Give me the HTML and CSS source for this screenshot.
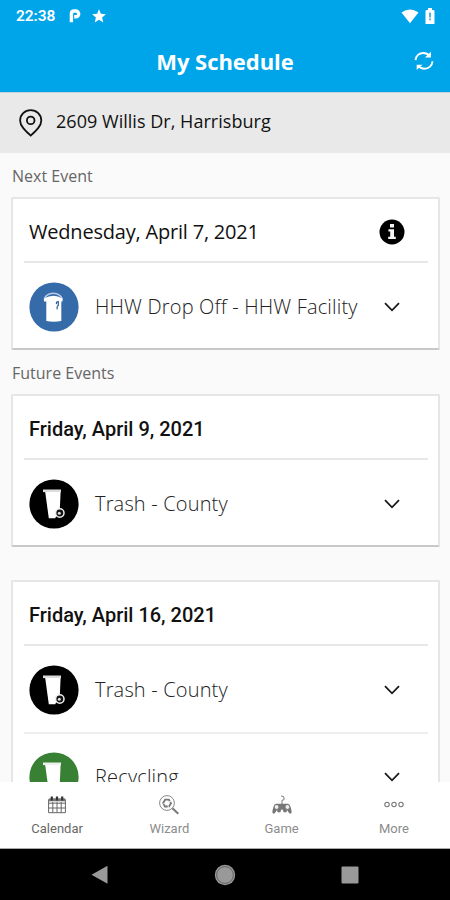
FILE: index.html
```html
<!DOCTYPE html>
<html lang="en">
<head>
<meta charset="utf-8">
<title>My Schedule</title>
<link rel="stylesheet" href="styles.css">
</head>
<body>
<svg class="defs" width="0" height="0" aria-hidden="true">
  <symbol id="chevron" viewBox="0 0 16 10"><path d="M1 1.2 8 8.4l7-7.2" fill="none" stroke="#161616" stroke-width="1.7"/></symbol>
  <symbol id="bin" viewBox="0 0 50 50">
    <path d="M14 10.5h18v2.6H14z" fill="#ddd"/>
    <path d="M16.2 13h15.4l-.8 18-4.6 8.2h-6.4z" fill="#fff"/>
    <circle cx="30.8" cy="34" r="4.2" fill="#111" stroke="#eee" stroke-width="1.5"/>
    <circle cx="30.3" cy="34.2" r="1.5" fill="#ddd"/>
  </symbol>
  <symbol id="recycle-bin" viewBox="0 0 50 50">
    <path d="M14 10.5h18v2.6H14z" fill="#eee"/>
    <path d="M16.2 13h15.4l-.8 18-4.6 8.2h-6.4z" fill="#fff"/>
  </symbol>
</svg>
<div class="screen">
  <header class="top">
    <div class="status">
      <span class="clock">22:38</span>
      <svg class="parking" width="12" height="14" viewBox="0 0 12 14"><path d="M2.4 13.2V4.4Q2.4 2 5 2H6.8a2.9 2.9 0 0 1 0 5.8H5.2" fill="none" stroke="#fff" stroke-width="3.4"/></svg>
      <svg class="star" width="14" height="14" viewBox="0 0 14 14"><path d="m7 .2 1.9 4.6 5 .4-3.8 3.2 1.2 5L7 10.8l-4.3 2.6 1.2-5L.1 5.2l5-.4z" fill="#fff"/></svg>
      <svg class="wifi" width="18" height="15" viewBox="0 0 18 15"><path d="M.5 3.6Q9-2.8 17.5 3.6L9 14.2z" fill="#fff"/></svg>
      <svg class="battery" width="10" height="16" viewBox="0 0 10 16"><path d="M3 0h4v2h1.2q1.3 0 1.3 1.3V16h-9V3.3Q.5 2 1.8 2H3z" fill="#fff"/><path d="M5 4.5v5M5 10.6v1.6" stroke="#0695d2" stroke-width="1.4"/></svg>
    </div>
    <div class="titlebar">
      <h1>My Schedule</h1>
      <svg class="refresh" width="20" height="20" viewBox="0 0 20 20"><path d="M1.5 9.2C2 5 5 2 9.5 2c2.6 0 4.6 1 6.3 3M18.5 10.2c-.3 4.4-3.7 7.5-8 7.5-2.8 0-5-1.1-6.6-3" fill="none" stroke="#fff" stroke-width="1.9"/><path d="M16.9.8v5.7h-6M2.7 19v-5.3h5.8z" fill="#fff"/></svg>
    </div>
  </header>
  <section class="address">
    <svg width="24" height="28" viewBox="0 0 24 28"><path d="M11.7 26.5C6.5 21.8 1.1 17.1 1.1 11.4a10.6 10.3 0 0 1 21.2 0c0 5.7-5.4 10.4-10.6 15.1z" fill="none" stroke="#111" stroke-width="1.8"/><circle cx="11.7" cy="11.4" r="3.8" fill="none" stroke="#111" stroke-width="1.8"/></svg>
    <span class="street">2609 Willis Dr, Harrisburg</span>
  </section>
  <main>
    <h2 class="next">Next Event</h2>
    <article class="card">
      <div class="date regular"><span>Wednesday, April 7, 2021</span>
        <svg class="info" width="26" height="26" viewBox="0 0 26 26"><circle cx="13" cy="13" r="12.5"/><path d="M11 5h4v3.4h-4zM9.4 10.3H15v7.4h1.8v2.2H9.2v-2.2h2v-5.2H9.4z" fill="#f4f4f4"/></svg>
      </div>
      <div class="event">
        <svg class="badge" width="50" height="50" viewBox="0 0 50 50"><circle cx="25" cy="25" r="24.6" fill="#356ba8"/><path d="M15.5 18.2C15 9 33.5 9 33 18.2" fill="none" stroke="#b9cbea" stroke-width="1.5"/><path d="M15 16.5q9.5-5.5 18.5 0v3h-1.2V39q-7.5 1.4-15 0V19.5H15z" fill="#fff"/><path d="M27.5 22.2q-.5-2.7 1.8-2.7v4q-1.7.3-1 3.8" fill="none" stroke="#315f9d" stroke-width="1.2"/></svg>
        <span class="name">HHW Drop Off - HHW Facility</span>
        <svg class="chev" width="16" height="10"><use href="#chevron"/></svg>
      </div>
    </article>
    <h2 class="future">Future Events</h2>
    <article class="card">
      <div class="date"><span>Friday, April 9, 2021</span></div>
      <div class="event">
        <svg class="badge" width="50" height="50" viewBox="0 0 50 50"><circle cx="25" cy="25" r="24.6"/><use href="#bin"/></svg>
        <span class="name">Trash - County</span>
        <svg class="chev" width="16" height="10"><use href="#chevron"/></svg>
      </div>
    </article>
    <article class="card later">
      <div class="date"><span>Friday, April 16, 2021</span></div>
      <div class="event">
        <svg class="badge" width="50" height="50" viewBox="0 0 50 50"><circle cx="25" cy="25" r="24.6"/><use href="#bin"/></svg>
        <span class="name">Trash - County</span>
        <svg class="chev" width="16" height="10"><use href="#chevron"/></svg>
      </div>
      <div class="event second">
        <svg class="badge" width="50" height="50" viewBox="0 0 50 50"><circle cx="25" cy="25" r="24.6" fill="#388033"/><use href="#recycle-bin"/></svg>
        <span class="name">Recycling</span>
        <svg class="chev" width="16" height="10"><use href="#chevron"/></svg>
      </div>
    </article>
  </main>
  <nav class="tabs">
    <a class="tab active"><svg width="20" height="20" viewBox="0 0 20 20"><path d="M1.6 4.5h16.8v13.2H1.6zM1.6 8.2h16.8M1.6 13h16.8M5.8 7v10.5M10 7v10.5M14.2 7v10.5" fill="none" stroke="#666" stroke-width="1"/><path d="M2 3.3h16v3H2z" fill="#777"/><path d="M4.8 1.4v4M10 1.4v4M15.2 1.4v4" stroke="#333" stroke-width="2.2"/></svg><span>Calendar</span></a>
    <a class="tab"><svg width="20" height="20" viewBox="0 0 20 20"><circle cx="8" cy="8" r="7.4" fill="none" stroke="#888"/><path d="M6.1 4.7h3.8L12 8.2l-2 3.3H6L4 8.2z" fill="none" stroke="#777" stroke-width="1.8" stroke-dasharray="5.5 1"/><path d="m13.4 13.3 5.9 5.4" stroke="#777" stroke-width="2"/></svg><span>Wizard</span></a>
    <a class="tab"><svg width="20" height="20" viewBox="0 0 20 20"><path d="M10 9V5.8q0-.8 1-.8 1.3 0 1-1.8Q12 1 9 1" fill="none" stroke="#888" stroke-width="1.1"/><path d="M4.2 8.7h11.6q2 0 2.7 3l1.1 4.2q.3 2.8-1.2 2.8-1.3 0-3.4-4H5q-2.1 4-3.4 4-1.5 0-1.2-2.8l1.1-4.2q.7-3 2.7-3z" fill="#777"/><circle cx="4.6" cy="12" r="1.9" fill="#eee"/><circle cx="15.4" cy="12" r="1.9" fill="#eee"/><circle cx="7" cy="15.6" r="2" fill="#777"/><circle cx="13" cy="15.6" r="2" fill="#777"/></svg><span>Game</span></a>
    <a class="tab"><svg width="20" height="20" viewBox="0 0 20 20"><g fill="none" stroke="#777" stroke-width="1.1"><circle cx="3" cy="9.5" r="2.2"/><circle cx="10" cy="9.5" r="2.2"/><circle cx="17" cy="9.5" r="2.2"/></g></svg><span>More</span></a>
  </nav>
  <footer class="system">
    <svg width="18" height="20" viewBox="0 0 18 20"><path d="M16.5.8v18L.5 9.8z" fill="#999"/></svg>
    <svg width="22" height="22" viewBox="0 0 22 22"><circle cx="11" cy="11" r="10.2" fill="#999"/><circle cx="11" cy="11" r="8.4" fill="none" stroke="#555" stroke-width=".8"/></svg>
    <svg width="18" height="18" viewBox="0 0 18 18"><rect x=".5" y=".5" width="17" height="17" rx="1" fill="#999"/></svg>
  </footer>
</div>
</body>
</html>
```

FILE: styles.css
```css
* { box-sizing: border-box; }
body { margin: 0; background: #fafafa; }
svg { display: block; flex: none; }
.defs { display: none; }
h1, h2 { margin: 0; font-weight: 400; }
.screen { width: 450px; height: 900px; display: flex; flex-direction: column; overflow: hidden; font-family: "Open Sans", sans-serif; color: #111; white-space: nowrap; }
.top { height: 92px; flex: none; background: #00a5e9; color: #fff; }
.status { height: 32px; padding: 0 15px 0 16px; display: flex; align-items: center; }
.clock { font: 600 15.5px/32px Roboto, sans-serif; letter-spacing: -.1px; width: 53px; }
.star { margin-left: 11px; }
.wifi { margin-left: auto; }
.battery { margin-left: 6px; }
.titlebar { height: 60px; display: grid; grid-template-columns: 1fr auto 1fr; align-items: center; padding: 0 16px 2px; }
h1 { grid-column: 2; font-size: 22px; font-weight: 700; line-height: 58px; letter-spacing: -.05px; }
.refresh { justify-self: end; }
.address { height: 61px; flex: none; background: #e9e9e9; border-top: 1px solid #c5d4da; display: flex; align-items: center; padding: 0 19px; gap: 13px; }
.street { font-size: 18px; line-height: 24px; letter-spacing: .03px; margin-top: -4px; }
main { flex: 1; min-height: 0; overflow: hidden; padding: 0 10px 0 11px; background: #fafafa; }
h2 { height: 44px; padding: 11px 0 0 1px; font-size: 16px; line-height: 24px; color: #666; }
.card { height: 153px; background: #fff; border: 2px solid #e6e6e6; border-bottom-color: #c8c8c8; border-radius: 2px; padding: 0 10px 0 11px; }
.later { margin-top: 33px; height: 240px; }
.date { height: 64px; border-bottom: 2px solid #e7e7e7; display: flex; align-items: center; padding: 4px 22px 0 5px; font: 500 20px/26px Roboto, sans-serif; }
.date.regular { font: 400 20px/26px "Open Sans", sans-serif; letter-spacing: -.2px; padding: 3px 23px 0 5px; }
.info { margin-left: auto; }
.event { height: 86px; display: flex; align-items: center; padding: 1px 28px 0 5px; }
.second { border-top: 2px solid #eee; }
.name { margin-left: 16px; font-size: 20px; font-weight: 300; line-height: 28px; letter-spacing: .17px; color: #222; }
.chev { margin-left: auto; }
.tabs { height: 67px; flex: none; background: #fff; display: grid; grid-template-columns: repeat(4, 1fr); padding-left: 1px; border-bottom: 1px solid #aaa; }
.tab { display: flex; flex-direction: column; align-items: center; padding-top: 13px; color: #8c8c8c; font: 400 13px/18px Roboto, sans-serif; }
.tab span { margin-top: 5px; }
.active { color: #686868; }
.system { height: 51px; flex: none; background: #000; display: flex; align-items: center; justify-content: space-between; padding: 0 91px; }
```
